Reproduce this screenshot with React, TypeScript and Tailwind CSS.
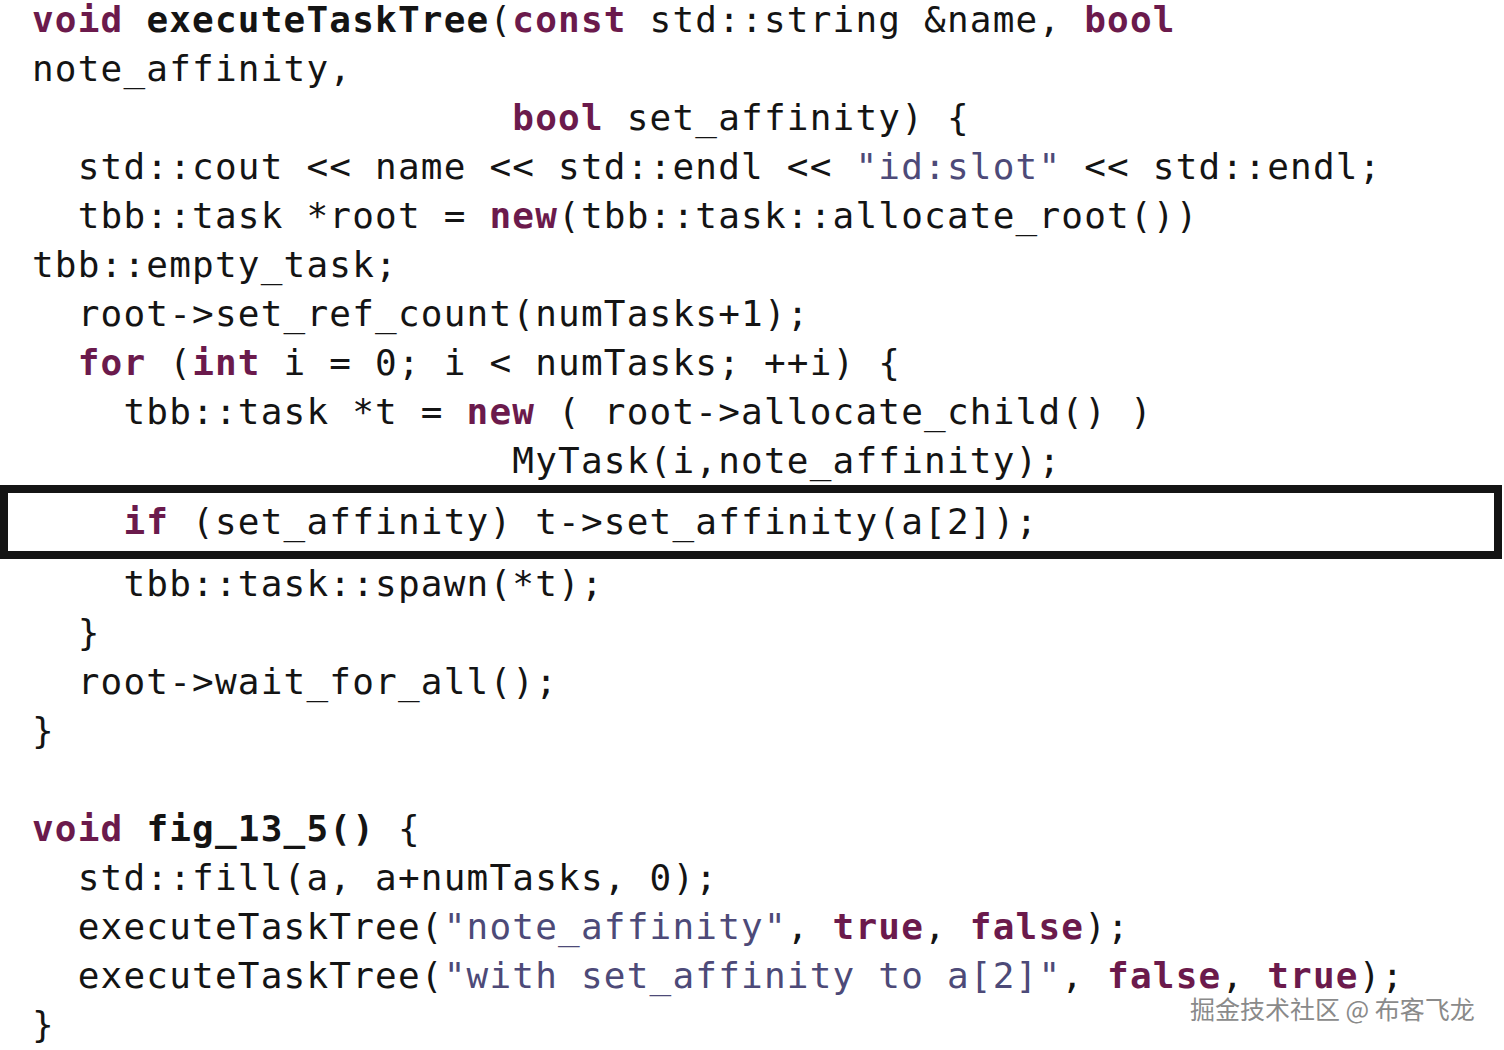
import React from "react";

type Seg = { t: string; k?: "kw" | "str" | "fn" };

const K = (t: string): Seg => ({ t, k: "kw" });
const S = (t: string): Seg => ({ t, k: "str" });
const F = (t: string): Seg => ({ t, k: "fn" });
const P = (t: string): Seg => ({ t });

const Line = ({ segs }: { segs: Seg[] }) => (
  <div className="h-[49px] leading-[49px] whitespace-pre pl-[32px]">
    {segs.map((s, i) =>
      s.k === "kw" ? (
        <span key={i} className="font-bold text-[#6b1a4c]">
          {s.t}
        </span>
      ) : s.k === "str" ? (
        <span key={i} className="text-[#4d4a78]">
          {s.t}
        </span>
      ) : s.k === "fn" ? (
        <span key={i} className="font-bold">
          {s.t}
        </span>
      ) : (
        <span key={i}>{s.t}</span>
      )
    )}
  </div>
);

const pad21 = "                     ";

export default function App() {
  return (
    <div className="relative w-[1504px] h-[1050px] overflow-hidden bg-white">
      <div
        className="-mt-[5px] text-[36px] tracking-[1.2px] text-[#141414]"
        style={{ fontFamily: '"DejaVu Sans Mono", "Liberation Mono", monospace' }}
      >
        <Line segs={[K("void"), P(" "), F("executeTaskTree"), P("("), K("const"), P(" std::string &name, "), K("bool")]} />
        <Line segs={[P("note_affinity,")]} />
        <Line segs={[P(pad21), K("bool"), P(" set_affinity) {")]} />
        <Line segs={[P("  std::cout << name << std::endl << "), S('"id:slot"'), P(" << std::endl;")]} />
        <Line segs={[P("  tbb::task *root = "), K("new"), P("(tbb::task::allocate_root())")]} />
        <Line segs={[P("tbb::empty_task;")]} />
        <Line segs={[P("  root->set_ref_count(numTasks+1);")]} />
        <Line segs={[P("  "), K("for"), P(" ("), K("int"), P(" i = 0; i < numTasks; ++i) {")]} />
        <Line segs={[P("    tbb::task *t = "), K("new"), P(" ( root->allocate_child() )")]} />
        <Line segs={[P(pad21 + "MyTask(i,note_affinity);")]} />
        <div className="w-[1502px] h-[74px] border-[8px] border-[#141414] flex items-center whitespace-pre pl-[24px]">
          <span>    </span>
          <span className="font-bold text-[#6b1a4c]">if</span>
          <span> (set_affinity) t-&gt;set_affinity(a[2]);</span>
        </div>
        <Line segs={[P("    tbb::task::spawn(*t);")]} />
        <Line segs={[P("  }")]} />
        <Line segs={[P("  root->wait_for_all();")]} />
        <Line segs={[P("}")]} />
        <Line segs={[P(" ")]} />
        <Line segs={[K("void"), P(" "), F("fig_13_5()"), P(" {")]} />
        <Line segs={[P("  std::fill(a, a+numTasks, 0);")]} />
        <Line segs={[P("  executeTaskTree("), S('"note_affinity"'), P(", "), K("true"), P(", "), K("false"), P(");")]} />
        <Line segs={[P("  executeTaskTree("), S('"with set_affinity to a[2]"'), P(", "), K("false"), P(", "), K("true"), P(");")]} />
        <Line segs={[P("}")]} />
      </div>
      <div
        className="absolute left-[1190px] top-[991px] text-[25px] leading-[34px] text-[#8a8a8a] whitespace-pre"
        style={{
          fontFamily: '"Noto Sans CJK SC", "Noto Sans", sans-serif',
          textShadow: "0 0 2px #fff, 0 0 2px #fff, 1px 1px 1px #fff",
        }}
      >
        掘金技术社区 @ 布客飞龙
      </div>
    </div>
  );
}
